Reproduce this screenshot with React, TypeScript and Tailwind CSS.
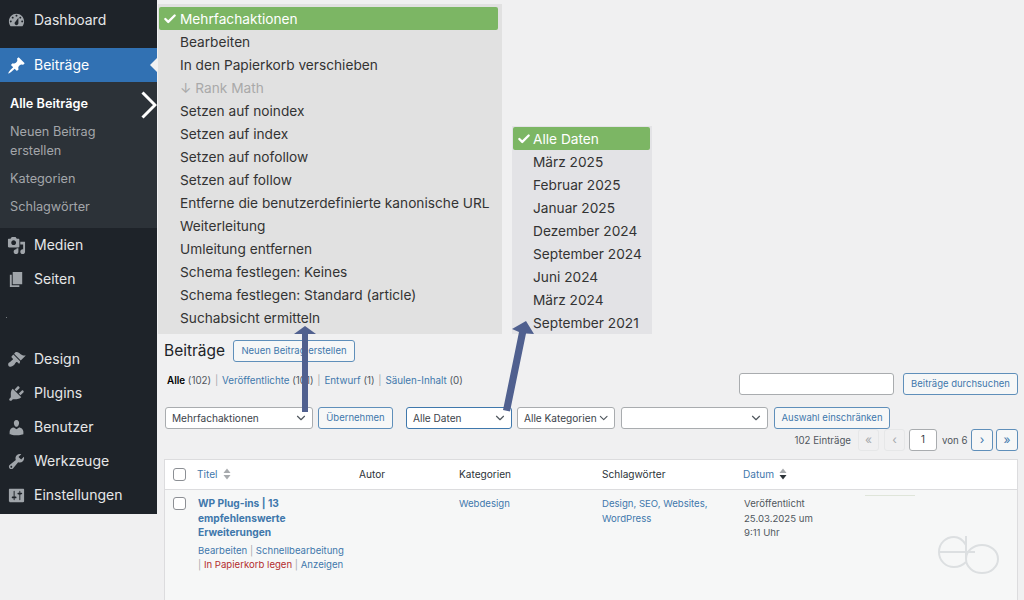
import * as React from "react";
import { Check, ChevronDown } from "lucide-react";

const font = "font-['Inter','Liberation_Sans',sans-serif]";

const icons = {
  dashboard:
    "M3.76 16h12.48c1.1-1.37 1.76-3.11 1.76-5 0-4.42-3.58-8-8-8s-8 3.58-8 8c0 1.89.66 3.63 1.76 5zM10 4c.55 0 1 .45 1 1s-.45 1-1 1-1-.45-1-1 .45-1 1-1zM6 6c.55 0 1 .45 1 1s-.45 1-1 1-1-.45-1-1 .45-1 1-1zm8 0c.55 0 1 .45 1 1s-.45 1-1 1-1-.45-1-1 .45-1 1-1zm-5.37 5.55L12 7v6c0 1.1-.9 2-2 2s-2-.9-2-2c0-.57.24-1.08.63-1.45zM4 10c.55 0 1 .45 1 1s-.45 1-1 1-1-.45-1-1 .45-1 1-1zm12 0c.55 0 1 .45 1 1s-.45 1-1 1-1-.45-1-1 .45-1 1-1z",
  post: "M10.44 3.02l1.82-1.82 6.36 6.35-1.83 1.82c-1.05-.68-2.48-.57-3.41.36l-.75.75c-.92.93-1.04 2.35-.35 3.41l-1.83 1.82-2.41-2.41-2.8 2.79c-.42.42-3.38 2.71-3.8 2.29s1.86-3.39 2.28-3.81l2.79-2.79L4.1 9.36l1.83-1.82c1.05.69 2.48.57 3.4-.36l.75-.75c.93-.92 1.05-2.35.36-3.41z",
  media:
    "M13 11V4c0-.55-.45-1-1-1h-1.67L9 1H5L3.67 3H2c-.55 0-1 .45-1 1v7c0 .55.45 1 1 1h10c.55 0 1-.45 1-1zM7 4.5c1.38 0 2.5 1.12 2.5 2.5S8.38 9.5 7 9.5 4.5 8.38 4.5 7 5.62 4.5 7 4.5zM14 6h5v10.5c0 1.38-1.12 2.5-2.5 2.5S14 17.88 14 16.5s1.12-2.5 2.5-2.5c.17 0 .34.02.5.05V9h-3V6zm-4 8.05V13h2v3.5c0 1.38-1.12 2.5-2.5 2.5S7 17.88 7 16.5 8.12 14 9.5 14c.17 0 .34.02.5.05z",
  page: "M6 15V2h10v13H6zm-1 1h8v2H3V5h2v11z",
  design:
    "M14.48 11.06L7.41 3.99l1.5-1.5c.5-.56 2.3-.47 3.51.32 1.21.8 1.43 1.28 2.91 2.1 1.18.64 2.45 1.26 4.45.85zm-.71.71L6.7 4.7 4.93 6.47c-.39.39-.39 1.02 0 1.41l1.06 1.06c.39.39.39 1.03 0 1.42-.6.6-1.43 1.11-2.21 1.69-.35.26-.7.53-1.01.84C1.43 13.23.78 15 1.53 16.5c.18.37.5.69.87.87 1.5.75 3.27.1 4.61-1.22.31-.31.58-.66.84-1.01.58-.78 1.09-1.61 1.69-2.21.39-.39 1.02-.39 1.41 0l1.06 1.06c.39.39 1.02.39 1.41 0z",
  plugins:
    "M13.11 4.36L9.87 7.6 8 5.73l3.24-3.24c.35-.34 1.05-.2 1.56.32.52.51.66 1.21.31 1.55zm-8 1.77l.91-1.12 9.01 9.01-1.19.84c-.71.71-2.63 1.16-3.82 1.16H6.14L4.9 17.26c-.59.59-1.54.59-2.12 0-.59-.58-.59-1.53 0-2.12l1.24-1.24v-3.88c0-1.13.4-3.19 1.09-3.89zm7.26 3.97l3.24-3.24c.34-.35 1.04-.21 1.55.31.52.51.66 1.21.31 1.55l-3.24 3.25z",
  users:
    "M10 9.25c-2.27 0-2.73-3.44-2.73-3.44C7 4.02 7.82 2 9.97 2c2.16 0 2.98 2.02 2.71 3.81 0 0-.41 3.44-2.68 3.44zm0 2.57L12.72 10c2.39 0 4.52 2.33 4.52 4.53v2.49s-3.65 1.13-7.24 1.13c-3.65 0-7.24-1.13-7.24-1.13v-2.49c0-2.25 1.94-4.48 4.47-4.48z",
  tools:
    "M16.68 9.77c-1.34 1.34-3.3 1.67-4.95.99l-5.41 6.52c-.99.99-2.59.99-3.58 0s-.99-2.59 0-3.57l6.52-5.42c-.68-1.65-.35-3.61.99-4.95 1.28-1.28 3.12-1.62 4.72-1.06l-2.89 2.89 2.82 2.82 2.86-2.87c.53 1.58.18 3.39-1.08 4.65zM3.81 16.21c.4.39 1.04.39 1.43 0 .4-.4.4-1.04 0-1.43-.39-.4-1.03-.4-1.43 0-.39.39-.39 1.03 0 1.43z",
  settings:
    "M18 16V4c0-.55-.45-1-1-1H3c-.55 0-1 .45-1 1v12c0 .55.45 1 1 1h14c.55 0 1-.45 1-1zM8 11h1c.55 0 1 .45 1 1s-.45 1-1 1H8v1.5c0 .28-.22.5-.5.5s-.5-.22-.5-.5V13H6c-.55 0-1-.45-1-1s.45-1 1-1h1V5.5c0-.28.22-.5.5-.5s.5.22.5.5V11zm5-2h-1c-.55 0-1-.45-1-1s.45-1 1-1h1V5.5c0-.28.22-.5.5-.5s.5.22.5.5V7h1c.55 0 1 .45 1 1s-.45 1-1 1h-1v5.5c0 .28-.22.5-.5.5s-.5-.22-.5-.5V9z",
};

function MenuItem({ icon, label, active }: { icon: string; label: string; active?: boolean }) {
  return (
    <div
      className={`flex h-[34px] items-center pl-[7px] text-[14px] ${
        active ? "bg-[#3171b3] text-white" : "text-[#e6e7e8]"
      }`}
    >
      <svg viewBox="0 0 20 20" className={`h-[19px] w-[19px] ${active ? "fill-white" : "fill-[#a0a5aa]"}`}>
        <path d={icon} />
      </svg>
      <span className="-mt-[2px] ml-2">{label}</span>
    </div>
  );
}

function Sidebar() {
  return (
    <div className="flex h-[514px] w-[157px] shrink-0 flex-col bg-[#1e2329] pt-[3px]">
      <MenuItem icon={icons.dashboard} label="Dashboard" />
      <div className="h-[11px]" />
      <div className="relative">
        <MenuItem icon={icons.post} label="Beiträge" active />
        {/* notch pointing at the content */}
        <div className="absolute right-0 top-[10px] h-0 w-0 border-y-[7px] border-r-[7px] border-y-transparent border-r-[#f0f0f1]" />
      </div>
      <div className="flex h-[146px] flex-col bg-[#2c3238] pl-[10px] pt-[13px] text-[12.7px] leading-[18.5px] text-[#a3a6aa]">
        <div className="font-semibold text-white">Alle Beiträge</div>
        <div className="mt-[9.5px]">
          Neuen Beitrag
          <br />
          erstellen
        </div>
        <div className="mt-[9.5px]">Kategorien</div>
        <div className="mt-[9.5px]">Schlagwörter</div>
      </div>
      <MenuItem icon={icons.media} label="Medien" />
      <MenuItem icon={icons.page} label="Seiten" />
      <div className="flex h-[46px] pl-[6px] pt-[21px]">
        <div className="h-px w-px bg-[#777c80]" />
      </div>
      <MenuItem icon={icons.design} label="Design" />
      <MenuItem icon={icons.plugins} label="Plugins" />
      <MenuItem icon={icons.users} label="Benutzer" />
      <MenuItem icon={icons.tools} label="Werkzeuge" />
      <MenuItem icon={icons.settings} label="Einstellungen" />
    </div>
  );
}

function Btn({ label, className = "" }: { label: string; className?: string }) {
  return (
    <div
      className={`flex h-[22px] shrink-0 items-center justify-center rounded-[3px] border border-[#5f8fba] bg-[#f6f7f7] pt-px text-[9.5px] whitespace-nowrap text-[#3f78ac] ${className}`}
    >
      {label}
    </div>
  );
}

function Select({ label, className = "", focus }: { label: string; className?: string; focus?: boolean }) {
  return (
    <div
      className={`flex h-[22px] shrink-0 items-center justify-between rounded-[3px] bg-white pl-[6px] pr-[4px] text-[10.1px] whitespace-nowrap text-[#3c434a] ${
        focus ? "border-[1.5px] border-[#3f78ac]" : "border border-[#a9acaf]"
      } ${className}`}
    >
      <span className="pt-[2px]">{label}</span>
      <ChevronDown className="h-[14px] w-[14px] text-[#50575e]" strokeWidth={2} />
    </div>
  );
}

function PageBtn({ label, off }: { label: string; off?: boolean }) {
  return (
    <div
      className={`flex h-[22px] items-center justify-center rounded-[3px] border text-[12px] ${
        off ? "w-[21px] border-[#e6e7e8] bg-[#f0f0f1] text-[#a7aaad]" : "w-[22px] border-[#5f8fba] bg-[#f6f7f7] text-[#3f78ac]"
      }`}
    >
      {label}
    </div>
  );
}

function SortArrows({ down }: { down?: boolean }) {
  return (
    <svg viewBox="0 0 8 12" className="ml-[5px] h-[12px] w-[8px]">
      <path d="M4 0.5 7.5 5H.5z" fill="#a7aaad" />
      <path d="M4 11.5.5 7h7z" fill={down ? "#2c3338" : "#a7aaad"} />
    </svg>
  );
}

function Dropdown({
  items,
  className,
  textClass,
  labelClass,
}: {
  items: React.ReactNode[];
  className: string;
  textClass: string;
  labelClass: string;
}) {
  return (
    <div className={`absolute ${className}`}>
      {items.map((item, i) =>
        i === 0 ? (
          <div key={i} className="flex h-[23px] items-center rounded-[2px] bg-[#7cb664] text-white">
            <Check className="ml-[4px] h-[14px] w-[14px]" strokeWidth={4} />
            <span className={`pt-[2px] ${labelClass}`}>{item}</span>
          </div>
        ) : (
          <div key={i} className={`flex h-[23px] items-center pt-[2px] ${textClass}`}>
            {item}
          </div>
        ),
      )}
    </div>
  );
}

const bulkActions: React.ReactNode[] = [
  "Mehrfachaktionen",
  "Bearbeiten",
  "In den Papierkorb verschieben",
  <span className="text-[#a9a9a9]">↓ Rank Math</span>,
  "Setzen auf noindex",
  "Setzen auf index",
  "Setzen auf nofollow",
  "Setzen auf follow",
  "Entferne die benutzerdefinierte kanonische URL",
  "Weiterleitung",
  "Umleitung entfernen",
  "Schema festlegen: Keines",
  "Schema festlegen: Standard (article)",
  "Suchabsicht ermitteln",
];

const dates = [
  "Alle Daten",
  "März 2025",
  "Februar 2025",
  "Januar 2025",
  "Dezember 2024",
  "September 2024",
  "Juni 2024",
  "März 2024",
  "September 2021",
];

function PostsTable() {
  return (
    <div className="mt-[8px] flex-1 border border-b-0 border-[#dcdcde] bg-[#f6f7f7] text-[9.6px]">
      <div className="grid h-[30px] grid-cols-[32px_162px_100px_143px_141px_1fr] items-center border-b border-[#dcdcde] bg-white text-[10.1px] text-[#2c3338]">
        <div className="pl-[8px]">
          <div className="h-[13px] w-[13px] rounded-[3px] border border-[#8c8f94] bg-white" />
        </div>
        <div className="flex items-center text-[#3f78ac]">
          Titel
          <SortArrows />
        </div>
        <div>Autor</div>
        <div>Kategorien</div>
        <div>Schlagwörter</div>
        <div className="flex items-center text-[#3f78ac]">
          Datum
          <SortArrows down />
        </div>
      </div>
      <div className="relative grid grid-cols-[32px_162px_100px_143px_141px_1fr] pt-[7px] leading-[14.5px]">
        <div className="pl-[8px]">
          <div className="h-[13px] w-[13px] rounded-[3px] border border-[#8c8f94] bg-white" />
        </div>
        <div className="pl-[1px]">
          <div className="-mt-px w-[100px] text-[10.2px] font-bold text-[#3f78ac]">
            WP Plug-ins | 13 empfehlenswerte Erweiterungen
          </div>
          <div className="mt-[4px] w-[160px] text-[#3f78ac]">
            Bearbeiten <span className="text-[#a7aaad]">|</span> Schnellbearbeitung
            <br />
            <span className="text-[#a7aaad]">|</span> <span className="text-[#b32d2e]">In Papierkorb legen</span>{" "}
            <span className="text-[#a7aaad]">|</span> Anzeigen
          </div>
        </div>
        <div />
        <div className="text-[#3f78ac]">Webdesign</div>
        <div className="w-[120px] text-[#3f78ac]">Design, SEO, Websites, WordPress</div>
        <div className="pl-[1px] text-[#50575e]">
          Veröffentlicht
          <br />
          25.03.2025 um
          <br />
          9:11 Uhr
        </div>
        {/* thin leftover line and watermark logo */}
        <div className="absolute left-[700px] top-[5px] h-px w-[50px] bg-[#dfe5da]" />
        <svg
          viewBox="0 0 62 40"
          fill="none"
          className="absolute left-[773px] top-[46px] h-[40px] w-[62px] stroke-[#dcdfe1]"
          strokeWidth="2"
        >
          <path d="M1 16H37M1 16C1 7 8 1 16 1 21 1 25 4 28 9M1 16C1 25 8 31 16 31 21 31 25 29 28 26" />
          <path d="M28 0V23" />
          <ellipse cx="44" cy="23" rx="16" ry="14" />
        </svg>
      </div>
    </div>
  );
}

function Arrows() {
  return (
    <svg viewBox="0 0 1024 600" className="pointer-events-none absolute inset-0 h-[600px] w-[1024px]">
      <path d="M302 412V334H294L305 326 316 334H308V412z" fill="#50608f" />
      <path d="M503 410 519 332 512 329 526 321 534 334 526 333.5 510 411.5z" fill="#50608f" />
    </svg>
  );
}

export default function App() {
  return (
    <div className={`relative flex h-[600px] w-[1024px] overflow-hidden bg-[#f0f0f1] ${font}`}>
      <Sidebar />

      <div className="flex min-w-0 flex-1 flex-col pl-[7px] pr-[6px] pt-[340px]">
        <div className="flex h-[22px] items-center">
          <h1 className="w-[59px] text-[15.5px] whitespace-nowrap text-[#1d2327]">Beiträge</h1>
          <Btn label="Neuen Beitrag erstellen" className="ml-[10px] w-[122px]" />
        </div>

        <div className="flex h-[33px] items-start justify-between">
          <div className="mt-[12px] pl-[3px] text-[9.8px] text-[#50575e]">
            <span className="font-semibold text-black">Alle</span> (102) <span className="mx-px text-[#a7aaad]">|</span>{" "}
            <span className="text-[#3f78ac]">Veröffentlichte</span> (101) <span className="mx-px text-[#a7aaad]">|</span>{" "}
            <span className="text-[#3f78ac]">Entwurf</span> (1) <span className="mx-px text-[#a7aaad]">|</span>{" "}
            <span className="text-[#3f78ac]">Säulen-Inhalt</span> (0)
          </div>
          <div className="mt-[11px] flex items-center">
            <div className="h-[22px] w-[155px] rounded-[3px] border border-[#a9acaf] bg-white" />
            <Btn label="Beiträge durchsuchen" className="ml-[9px] w-[115px]" />
          </div>
        </div>

        <div className="mt-[12px] flex items-center">
          <Select label="Mehrfachaktionen" className="ml-px w-[148px]" />
          <Btn label="Übernehmen" className="ml-[5px] w-[75px]" />
          <Select label="Alle Daten" focus className="ml-[13px] w-[106px]" />
          <Select label="Alle Kategorien" className="ml-[5px] w-[98px]" />
          <Select label="" className="ml-[6px] w-[147px]" />
          <Btn label="Auswahl einschränken" className="ml-[6px] w-[116px]" />
        </div>

        <div className="flex h-[22px] items-center justify-end text-[9.7px] text-[#50575e]">
          <span className="mr-[7px] pt-[2px]">102 Einträge</span>
          <PageBtn label="«" off />
          <div className="w-[5px]" />
          <PageBtn label="‹" off />
          <div className="ml-[4px] flex h-[22px] w-[28px] items-center justify-center rounded-[3px] border border-[#a9acaf] bg-white text-[#2c3338]">
            1
          </div>
          <span className="mx-[5px] w-[24px] whitespace-nowrap pt-[2px]">von 6</span>
          <PageBtn label="›" />
          <div className="w-[3px]" />
          <PageBtn label="»" />
        </div>

        <PostsTable />
      </div>

      <Dropdown
        items={bulkActions}
        className="left-[158px] top-[4px] h-[330px] w-[344px] bg-[#e1e1e1] pl-px pr-[4px] pt-[3px] text-[13.7px] text-[#333]"
        textClass="pl-[21px]"
        labelClass="ml-[3px]"
      />
      <Dropdown
        items={dates}
        className="left-[512px] top-[126px] h-[208px] w-[140px] bg-[#e3e3e6] pl-px pr-[2px] pt-px text-[13.7px] text-[#333]"
        textClass="pl-[20px]"
        labelClass="ml-[2px]"
      />

      {/* white chevron annotation */}
      <svg viewBox="0 0 16 28" fill="none" className="absolute left-[141px] top-[91px] h-[28px] w-[16px]">
        <path d="M1.5 1.5 14 14 1.5 26.5" stroke="white" strokeWidth="3" />
      </svg>
      <Arrows />
    </div>
  );
}
